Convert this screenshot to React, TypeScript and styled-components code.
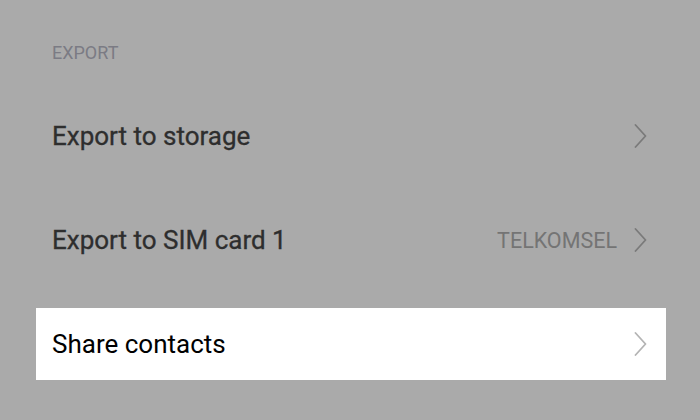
import React from 'react'
import styled, { createGlobalStyle } from 'styled-components'

const GlobalStyle = createGlobalStyle`
  html, body {
    margin: 0;
    padding: 0;
    background: #aaaaaa;
    font-family: Roboto, "Noto Sans", "Liberation Sans", sans-serif;
  }
`

const Page = styled.div`
  width: 700px;
  height: 420px;
  background: #aaaaaa;
  padding: 42px 34px 0 36px;
  box-sizing: border-box;
  overflow: hidden;
`

const SectionTitle = styled.div`
  padding-left: 16px;
  height: 22px;
  line-height: 22px;
  font-size: 18px;
  color: #7b7b84;
`

const List = styled.div`
  margin-top: 36px;
  display: flex;
  flex-direction: column;
  gap: 32px;
`

const Row = styled.div<{ $active?: boolean }>`
  height: 72px;
  display: flex;
  align-items: center;
  padding: 0 19px 0 16px;
  background: ${p => (p.$active ? '#ffffff' : 'transparent')};
`

const Label = styled.span<{ $active?: boolean }>`
  flex: 1;
  font-size: 26px;
  font-weight: 400;
  color: ${p => (p.$active ? '#000000' : '#2e2e2e')};
  -webkit-text-stroke: ${p => (p.$active ? '0' : '0.3px')};
`

const Value = styled.span`
  font-size: 21.5px;
  color: #747474;
  margin-right: 17px;
`

const Chevron = ({ color }: { color: string }) => (
  <svg width="13" height="24" viewBox="0 0 13 24">
    <polyline
      points="1.5,1 11.5,12 1.5,23"
      fill="none"
      stroke={color}
      strokeWidth="1.8"
      strokeLinecap="round"
      strokeLinejoin="round"
    />
  </svg>
)

const items = [
  { label: 'Export to storage' },
  { label: 'Export to SIM card 1', value: 'TELKOMSEL' },
  { label: 'Share contacts', active: true },
]

export default function App() {
  return (
    <>
      <GlobalStyle />
      <Page>
        <SectionTitle>EXPORT</SectionTitle>
        <List>
          {items.map(item => (
            <Row key={item.label} $active={item.active}>
              <Label $active={item.active}>{item.label}</Label>
              {item.value && <Value>{item.value}</Value>}
              <Chevron color={item.active ? '#b4b4b4' : '#7a7a7a'} />
            </Row>
          ))}
        </List>
      </Page>
    </>
  )
}
